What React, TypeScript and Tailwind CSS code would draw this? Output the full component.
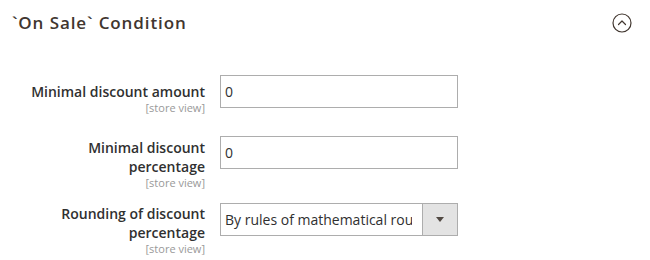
import React from 'react';

type Row = {
  label: string;
  value: string;
  select?: boolean;
  rowClass: string;
  labelPad: string;
};

const rows: Row[] = [
  { label: 'Minimal discount amount', value: '0', rowClass: 'mt-0', labelPad: 'pt-[7px]' },
  { label: 'Minimal discount percentage', value: '0', rowClass: 'mt-[22px]', labelPad: 'pt-[2px]' },
  {
    label: 'Rounding of discount percentage',
    value: 'By rules of mathematical rounding',
    select: true,
    rowClass: 'mt-[14px]',
    labelPad: 'pt-[1px]',
  },
];

function CollapseIcon() {
  return (
    <svg width="20" height="20" viewBox="0 0 20 20" fill="none" stroke="#41362f" strokeWidth="1.2">
      <circle cx="10" cy="10" r="9" />
      <path d="M6.5 11.5 L10 8 L13.5 11.5" strokeLinecap="round" strokeLinejoin="round" />
    </svg>
  );
}

function Field({ row }: { row: Row }) {
  if (row.select) {
    return (
      <div className="ml-[15px] flex h-[33px] w-[238px] border border-[#adadad] bg-white">
        <div className="flex min-w-0 flex-1 items-center pl-[4px] pr-[10px]">
          <span className="min-w-0 flex-1 overflow-hidden whitespace-nowrap text-[14px] leading-[19px] text-[#303030]">
            {row.value}
          </span>
        </div>
        <div className="flex w-[35px] items-center justify-center border-l border-[#adadad] bg-[#e3e3e3]">
          <span className="h-0 w-0 border-x-[4px] border-t-[5px] border-x-transparent border-t-[#514943]" />
        </div>
      </div>
    );
  }
  return (
    <div className="ml-[15px] flex h-[33px] w-[238px] items-center border border-[#adadad] bg-white pl-[4px]">
      <span className="text-[14px] leading-[19px] text-[#303030]">{row.value}</span>
    </div>
  );
}

export default function App() {
  return (
    <div className="h-[260px] w-[650px] overflow-hidden bg-white font-['Open_Sans',sans-serif]">
      {/* Section header */}
      <div className="flex items-center justify-between pl-[12px] pr-[18px] pt-[11px]">
        <h2 className="text-[17px] font-semibold leading-[24px] tracking-[0.9px] text-[#41362f]">`On Sale` Condition</h2>
        <CollapseIcon />
      </div>

      {/* Fields */}
      <div className="mt-[40px]">
        {rows.map((row) => (
          <div key={row.label} className={`flex items-start ${row.rowClass}`}>
            <div className={`ml-[25px] w-[180px] text-right ${row.labelPad}`}>
              <div className="text-[14px] font-semibold leading-[19px] text-[#303030]">{row.label}</div>
              <div className="text-[11px] leading-[13px] text-[#999999]">[store view]</div>
            </div>
            <Field row={row} />
          </div>
        ))}
      </div>
    </div>
  );
}
